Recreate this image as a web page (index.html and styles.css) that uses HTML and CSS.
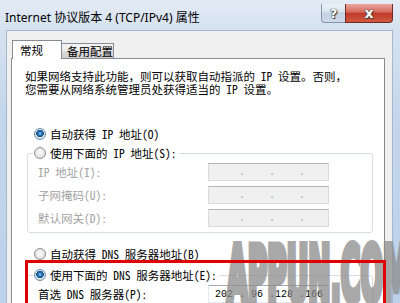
FILE: index.html
```html
<!DOCTYPE html>
<html lang="zh-CN">
<head>
<meta charset="utf-8">
<title>Internet 协议版本 4 (TCP/IPv4) 属性</title>
<link rel="stylesheet" href="styles.css">
</head>
<body>
<div class="window">
  <div class="titlebar">
    <span class="title">Internet 协议版本 4 (TCP/IPv4) 属性</span>
    <div class="caption-btns">
      <span class="cap-btn help">?</span>
      <span class="cap-btn close">x</span>
    </div>
  </div>
  <div class="client">
    <div class="tabs">
      <div class="tab active">常规</div>
      <div class="tab">备用配置</div>
    </div>
    <div class="panel">
      <p class="intro">如果网络支持此功能，则可以获取自动指派的 IP 设置。否则，<br>您需要从网络系统管理员处获得适当的 IP 设置。</p>

      <div class="radio-row first checked"><span class="radio"></span><span>自动获得 IP 地址(O)</span></div>

      <fieldset class="group ip-group">
        <legend class="radio-row"><span class="radio"></span><span>使用下面的 IP 地址(S):</span></legend>
        <div class="fields disabled">
          <span class="label">IP 地址(I):</span>
          <div class="ipbox"><span class="ip">    .    .    .</span></div>
          <span class="label">子网掩码(U):</span>
          <div class="ipbox"><span class="ip">    .    .    .</span></div>
          <span class="label">默认网关(D):</span>
          <div class="ipbox"><span class="ip">    .    .    .</span></div>
        </div>
      </fieldset>

      <div class="radio-row dns-auto"><span class="radio"></span><span>自动获得 DNS 服务器地址(B)</span></div>

      <fieldset class="group dns-group">
        <legend class="radio-row checked"><span class="radio"></span><span>使用下面的 DNS 服务器地址(E):</span></legend>
        <div class="fields">
          <span class="label">首选 DNS 服务器(P):</span>
          <div class="ipbox enabled"><span class="ip">202 . 96 .128 .166</span></div>
        </div>
      </fieldset>
    </div>
  </div>
  <div class="watermark">APPUN.COM</div>
  <div class="annotation"></div>
</div>
</body>
</html>
```

FILE: styles.css
```css
html, body {
  margin: 0;
  padding: 0;
  width: 400px;
  height: 303px;
  overflow: hidden;
  background: #ffffff;
}

.window {
  position: relative;
  width: 400px;
  height: 303px;
  overflow: hidden;
  display: flex;
  flex-direction: column;
  background: linear-gradient(to bottom, #e3ebf5 0px, #d6e2f0 30px, #c3d6ec 120px, #bcd2ea 303px);
}

.titlebar {
  height: 30px;
  flex: none;
  display: flex;
  align-items: flex-start;
  padding-left: 5px;
}

.title {
  margin-top: 10px;
  font-family: "Noto Sans", "Noto Sans CJK SC", sans-serif;
  font-size: 12px;
  line-height: 15px;
  color: #000;
  white-space: nowrap;
}

.caption-btns {
  margin-left: auto;
  margin-right: 7px;
  margin-top: 4px;
  display: flex;
}

.cap-btn {
  height: 19px;
  box-sizing: border-box;
  display: flex;
  align-items: center;
  justify-content: center;
  font-family: "DejaVu Sans", sans-serif;
  font-weight: bold;
  color: #fff;
  text-shadow: 0 0 1px #333, 0 0 1px #333, 1px 1px 1px #444;
}

.cap-btn.help {
  width: 24px;
  font-size: 13px;
  border: 1px solid #8596ad;
  border-right: none;
  border-top: none;
  border-radius: 0 0 0 4px;
  background: linear-gradient(to bottom, #eef3f9 0%, #d8e2ee 45%, #c3d1e2 50%, #cfdbea 100%);
}

.cap-btn.close {
  width: 48px;
  font-size: 14px;
  border: 1px solid #6f2c26;
  border-top: none;
  border-radius: 0 0 4px 0;
  background: linear-gradient(to bottom, #e9a79f 0%, #d56a5c 45%, #c0392b 52%, #cf5a3e 100%);
}

.client {
  flex: 1;
  margin: 0 7px 0 6px;
  border: 1px solid #a8b8cc;
  border-bottom: none;
  background: #f0f0f0;
  padding: 9px 7px 0 4px;
  font-family: "Noto Sans Mono CJK SC", "Noto Sans CJK SC", sans-serif;
  font-size: 11.5px;
  color: #000;
}

.tabs {
  display: flex;
  align-items: flex-end;
  margin-left: 1px;
}

.tab {
  box-sizing: border-box;
  white-space: nowrap;
}

.tab.active {
  position: relative;
  z-index: 1;
  width: 50px;
  height: 19px;
  margin-bottom: -1px;
  padding: 2px 0 0 7px;
  line-height: 15px;
  background: #ffffff;
  border: 1px solid #898c95;
  border-bottom: none;
}

.tab:not(.active) {
  width: 52px;
  height: 15px;
  padding: 0 0 0 5px;
  line-height: 15px;
  border: 1px solid #898c95;
  border-left: none;
  border-bottom: none;
  background: linear-gradient(to bottom, #f3f3f3 0%, #ebebeb 50%, #dddddd 50%, #cfcfcf 100%);
}

.panel {
  background: #ffffff;
  border: 1px solid #898c95;
  height: 260px;
  box-sizing: border-box;
  padding-top: 11px;
}

.intro {
  margin: 0;
  padding-left: 13px;
  line-height: 12.5px;
  white-space: nowrap;
}

.radio-row {
  display: flex;
  align-items: center;
  gap: 4px;
  height: 16px;
  line-height: 16px;
  white-space: nowrap;
}

.radio-row.first {
  margin: 31px 0 0 22px;
}

.radio-row.dns-auto {
  margin: 13px 0 0 22px;
}

.radio {
  width: 12px;
  height: 12px;
  box-sizing: border-box;
  border-radius: 50%;
  border: 1px solid #8e8f8f;
  background: radial-gradient(circle at 50% 45%, #ffffff 0, #eeeeee 40%, #cfcfcf 100%);
  flex: none;
}

.radio-row.checked .radio {
  border-color: #6f8eab;
  background:
    radial-gradient(circle at 50% 45%, #a9e0ff 0, #3a8bd0 1.2px, #1d5a96 3px, #184a7c 3.6px, rgba(0,0,0,0) 4px),
    radial-gradient(circle at 50% 45%, #ffffff 0, #e8eef4 50%, #c8d3de 100%);
}

.group {
  border: 1px solid #d5dfe5;
  border-radius: 3px;
  margin: 3px 11px 0 15px;
  padding: 1px 6px 5px 5px;
  min-width: 0;
}

.group legend {
  padding: 0 2px 0 1px;
}

.dns-group {
  margin-top: 5px;
  padding-bottom: 20px;
}

.fields {
  display: grid;
  grid-template-columns: 170px 121px;
  grid-auto-rows: 18px;
  row-gap: 5px;
  margin-left: 5px;
  margin-top: 1px;
  align-items: center;
}

.label {
  white-space: nowrap;
  line-height: 18px;
}

.fields.disabled .label {
  color: #a3a3a3;
}

.ipbox {
  box-sizing: border-box;
  height: 18px;
  width: 121px;
  padding-left: 6px;
  border: 1px solid #dadada;
  border-top-color: #b5b5b5;
  background: #f0f0f0;
  color: #a0a0a0;
}

.ipbox.enabled {
  background: #ffffff;
  border-color: #e3e9ef;
  border-top-color: #abadb3;
  color: #000;
}

.ip {
  display: block;
  font-family: "Liberation Mono", monospace;
  font-size: 10px;
  line-height: 17px;
  white-space: pre;
}

.watermark {
  position: absolute;
  left: 227px;
  top: 237px;
  font-family: "DejaVu Sans Condensed", "DejaVu Sans", sans-serif;
  font-weight: bold;
  font-size: 76px;
  line-height: 76px;
  white-space: nowrap;
  color: #8c8c8c;
  -webkit-text-stroke: 8px #8c8c8c;
  opacity: 0.75;
  transform: scaleX(0.39);
  transform-origin: 0 0;
  pointer-events: none;
}

.annotation {
  position: absolute;
  left: 25px;
  top: 260px;
  width: 361px;
  height: 70px;
  box-sizing: border-box;
  border: 3px solid #e10000;
  pointer-events: none;
}
```
